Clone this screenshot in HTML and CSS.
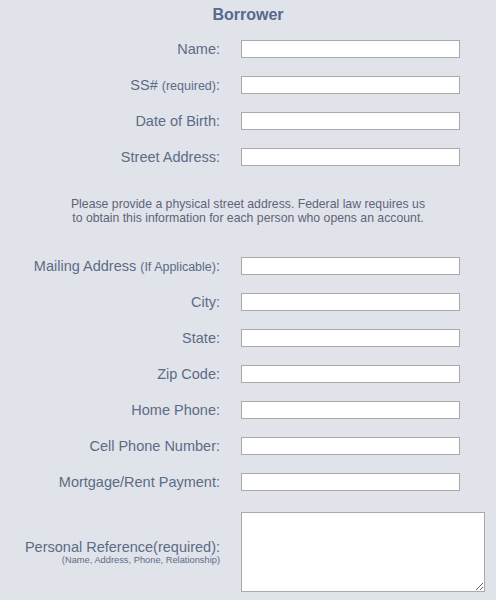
FILE: index.html
```html
<!DOCTYPE html>
<html lang="en">
<head>
    <meta charset="UTF-8">
    <meta name="viewport" content="width=device-width, initial-scale=1.0">
    <title>Borrower</title>
    <link rel="stylesheet" href="styles.css">
</head>
<body>
    <form class="borrower">
        <h2>Borrower</h2>

        <div class="row">
            <label for="name">Name:</label>
            <input type="text" id="name">
        </div>
        <div class="row">
            <label for="ssn">SS# <small>(required)</small>:</label>
            <input type="text" id="ssn">
        </div>
        <div class="row">
            <label for="dob">Date of Birth:</label>
            <input type="text" id="dob">
        </div>
        <div class="row">
            <label for="street">Street Address:</label>
            <input type="text" id="street">
        </div>

        <p class="note">Please provide a physical street address. Federal law requires us<br>to obtain this information for each person who opens an account.</p>

        <div class="row">
            <label for="mailing">Mailing Address <small>(If Applicable)</small>:</label>
            <input type="text" id="mailing">
        </div>
        <div class="row">
            <label for="city">City:</label>
            <input type="text" id="city">
        </div>
        <div class="row">
            <label for="state">State:</label>
            <input type="text" id="state">
        </div>
        <div class="row">
            <label for="zip">Zip Code:</label>
            <input type="text" id="zip">
        </div>
        <div class="row">
            <label for="home">Home Phone:</label>
            <input type="text" id="home">
        </div>
        <div class="row">
            <label for="cell">Cell Phone Number:</label>
            <input type="text" id="cell">
        </div>
        <div class="row">
            <label for="rent">Mortgage/Rent Payment:</label>
            <input type="text" id="rent">
        </div>
        <div class="row row-tall">
            <label for="reference">Personal Reference(required):<span class="hint">(Name, Address, Phone, Relationship)</span></label>
            <textarea id="reference"></textarea>
        </div>
    </form>
</body>
</html>
```

FILE: styles.css
```css
body {
    margin: 0;
    background-color: #e0e3ea;
    font-family: "Liberation Sans", Arial, Helvetica, sans-serif;
    color: #5d6b86;
}

.borrower {
    padding-top: 6px;
}

.borrower h2 {
    margin: 0 0 16px;
    text-align: center;
    font-size: 16px;
    font-weight: bold;
    line-height: 18px;
    color: #566a8c;
}

.row {
    display: grid;
    grid-template-columns: 220px 219px;
    grid-template-rows: 18px;
    column-gap: 21px;
    align-items: center;
    margin-bottom: 18px;
}

.row label {
    text-align: right;
    font-size: 14.5px;
    line-height: 18px;
    white-space: nowrap;
}

.row label small {
    font-size: 12.5px;
    line-height: 1;
}

.row input {
    box-sizing: border-box;
    width: 219px;
    height: 18px;
    margin: 0;
    padding: 1px 3px;
    border: 1px solid #a9a9a9;
    background: #fff;
}

.note {
    margin: 31px 0 32px;
    text-align: center;
    font-size: 12.25px;
    line-height: 14px;
    color: #5f6479;
}

.row-tall {
    grid-template-columns: 220px 244px;
    grid-template-rows: 80px;
    margin-top: 21px;
}

.row-tall label {
    line-height: 15px;
}

.row-tall .hint {
    display: block;
    font-size: 9.3px;
    line-height: 10px;
}

.row-tall textarea {
    box-sizing: border-box;
    width: 244px;
    height: 80px;
    margin: 0;
    border: 1px solid #a9a9a9;
    background: #fff;
}
```
